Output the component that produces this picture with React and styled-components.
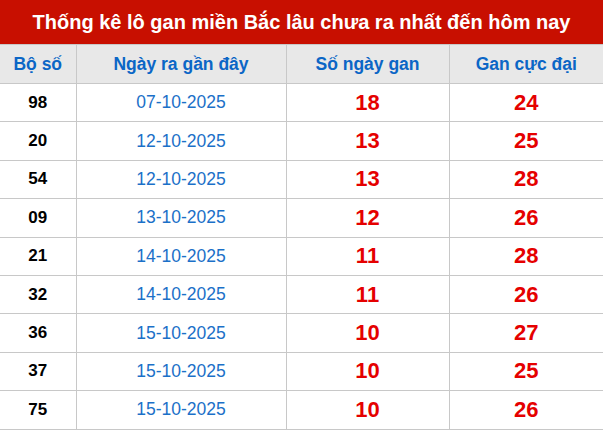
import React from "react";
import styled, { createGlobalStyle } from "styled-components";

const Global = createGlobalStyle`
  html, body { margin: 0; padding: 0; background: #fff; }
  body { font-family: "Liberation Sans", Arial, sans-serif; }
`;

const Wrap = styled.div`
  width: 603px;
`;

const Title = styled.h2`
  margin: 0;
  height: 44px;
  display: flex;
  align-items: center;
  justify-content: center;
  background: #c80f00;
  color: #fff;
  font-size: 20px;
  font-weight: bold;
`;

const Table = styled.table`
  width: 603px;
  border-collapse: collapse;
  table-layout: fixed;
`;

const Th = styled.th`
  background: #e8e8e8;
  color: #0b66c6;
  font-size: 17.5px;
  font-weight: bold;
  height: 38px;
  padding: 0;
  border: 1px solid #c8c8c8;
  border-left: ${(p) => (p.$first ? "none" : "1px solid #c8c8c8")};
  border-right: ${(p) => (p.$last ? "none" : "1px solid #c8c8c8")};
  text-align: center;
`;

const Td = styled.td`
  height: 37.4px;
  padding: 0;
  text-align: center;
  border: 1px solid #c8c8c8;
  border-left: ${(p) => (p.$first ? "none" : "1px solid #c8c8c8")};
  border-right: ${(p) => (p.$last ? "none" : "1px solid #c8c8c8")};
  ${(p) =>
    p.$kind === "num" &&
    `color:#000; font-weight:bold; font-size:17px;`}
  ${(p) =>
    p.$kind === "date" &&
    `color:#1b70c8; font-size:17.5px;`}
  ${(p) =>
    p.$kind === "red" &&
    `color:#e50000; font-weight:bold; font-size:22px;`}
`;

const rows = [
  ["98", "07-10-2025", "18", "24"],
  ["20", "12-10-2025", "13", "25"],
  ["54", "12-10-2025", "13", "28"],
  ["09", "13-10-2025", "12", "26"],
  ["21", "14-10-2025", "11", "28"],
  ["32", "14-10-2025", "11", "26"],
  ["36", "15-10-2025", "10", "27"],
  ["37", "15-10-2025", "10", "25"],
  ["75", "15-10-2025", "10", "26"],
];

export default function App() {
  return (
    <Wrap>
      <Global />
      <Title>Thống kê lô gan miền Bắc lâu chưa ra nhất đến hôm nay</Title>
      <Table>
        <colgroup>
          <col style={{ width: 76 }} />
          <col style={{ width: 210 }} />
          <col style={{ width: 163 }} />
          <col style={{ width: 154 }} />
        </colgroup>
        <thead>
          <tr>
            <Th $first>Bộ số</Th>
            <Th>Ngày ra gần đây</Th>
            <Th>Số ngày gan</Th>
            <Th $last>Gan cực đại</Th>
          </tr>
        </thead>
        <tbody>
          {rows.map((r, i) => (
            <tr key={i}>
              <Td $first $kind="num">{r[0]}</Td>
              <Td $kind="date">{r[1]}</Td>
              <Td $kind="red">{r[2]}</Td>
              <Td $last $kind="red">{r[3]}</Td>
            </tr>
          ))}
        </tbody>
      </Table>
    </Wrap>
  );
}
